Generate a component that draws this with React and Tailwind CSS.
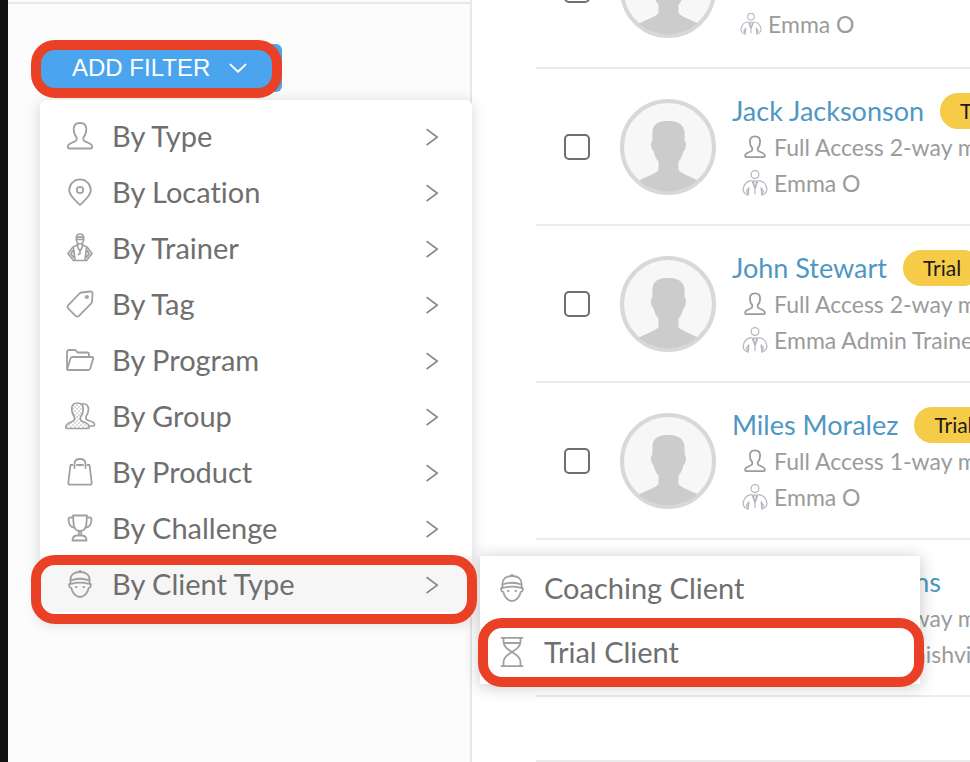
import { useState } from 'react';

const PERSON_PATH =
  'M16 3c-4.400 0-6.300 2.800-6.300 6.300 0 3.700.9 6 2.900 8.200v2.300c0 2.700-8.800 2.200-8.800 7.200 0 1 .5 1.500 1.500 1.500h21.400c1 0 1.500-.5 1.500-1.500 0-5-8.800-4.500-8.800-7.200v-2.300c2-2.200 2.900-4.500 2.900-8.200C22.300 5.800 20.400 3 16 3z';

function Icon({ className = 'size-8', strokeWidth = 1.8, children }) {
  return (
    <svg
      viewBox="0 0 32 32"
      fill="none"
      stroke="currentColor"
      strokeWidth={strokeWidth}
      strokeLinecap="round"
      strokeLinejoin="round"
      className={`shrink-0 ${className}`}
      aria-hidden="true"
    >
      {children}
    </svg>
  );
}

const PersonIcon = (props) => (
  <Icon {...props}>
    <path d={PERSON_PATH} />
  </Icon>
);

const PinIcon = () => (
  <Icon>
    <path d="M16 29C12 24.500 5.200 20 5.200 14.200a10.800 10.800 0 0 1 21.600 0C26.800 20 20 24.500 16 29z" />
    <circle cx="16" cy="14" r="3.200" />
  </Icon>
);

const TrainerIcon = () => (
  <Icon strokeWidth={1.7}>
    <path d="M12.500 5.500c0-2 1-3.500 3.500-3.500s3.500 1.500 3.500 3.500V8c0 2-1.500 4-3.500 4s-3.500-2-3.500-4z" />
    <path d="M12.500 5.500c2-.7 5-.7 7 0M12.500 7.500h7" />
    <path d="M13.500 11.500v1.500l-4.500 2L4 21.500l5.500 7h13l5.500-7-5-6.500-4.500-2v-1.500" />
    <path d="M13.500 13c.3 3 1 4.500 2.500 6 1.500-1.500 2.200-3 2.500-6M16 19v2.500l-1.500 1M9.500 16l1.500 12M22.500 16l-1.500 12M8.500 19l-1.500 3 2.500 3M23.500 19l1.500 3-2.500 3" />
  </Icon>
);

const TagIcon = () => (
  <Icon>
    <path d="M17.500 4.500 26.500 3.500c1.200-.1 2 .6 2 1.800l-.4 8c0 .8-.3 1.400-.8 2L15 27.800c-1.200 1.200-2.300 1.200-3.400.1l-7.300-7.300c-1.100-1.100-1.100-2.200 0-3.400L15.500 5.500c.6-.6 1.200-.9 2-1z" />
    <circle cx="22.800" cy="9" r="1.200" />
  </Icon>
);

const FolderIcon = () => (
  <Icon>
    <path d="M3 24.500V8c0-1.200.7-2 2-2h5.500c1 0 1.500.3 2 1.100l1 1.400H23c1.200 0 2 .7 2 2V13" />
    <path d="M3.200 25 6.500 14.500c.3-1 .9-1.500 2-1.500H28c1 0 1.500.7 1.200 1.700l-3 9.800c-.3 1-.9 1.500-2 1.500H4.200c-.8 0-1.200-.3-1-1z" />
  </Icon>
);

const GroupIcon = () => (
  <Icon strokeWidth={1.700}>
    <defs>
      <pattern id="dots" width="4" height="4" patternUnits="userSpaceOnUse">
        <circle cx="1" cy="1" r="0.700" fill="currentColor" stroke="none" />
        <circle cx="3" cy="3" r="0.700" fill="currentColor" stroke="none" />
      </pattern>
    </defs>
    <path
      fill="url(#dots)"
      d="M13.500 3C9.500 3 7.700 5.500 7.700 9c0 3.500.8 5.500 2.800 8v2.500c0 2.700-8.800 2.500-8.800 7.500 0 1 .5 1.500 1.500 1.500h20.600c1 0 1.500-.5 1.500-1.500 0-5-8.800-4.800-8.800-7.500V17c2-2.500 2.800-4.500 2.800-8 0-3.500-1.800-6-5.800-6z"
    />
    <path d="M18.500 3.800c4-.3 6 2 6 5.200 0 3.500-1 5.500-2.500 7.500v2c0 3 8.500 2 8.500 6 0 1-.4 1.500-1.300 1.500H25" />
  </Icon>
);

const BagIcon = () => (
  <Icon>
    <path d="M8.500 9H6.500l-2.200 17.500c-.2 1.400.5 2.200 1.800 2.200h19.800c1.300 0 2-.8 1.800-2.200L25.500 9h-2M13 9h6" />
    <path d="M10.500 12V8c0-3 2-5 5.500-5s5.500 2 5.500 5v4" />
  </Icon>
);

const TrophyIcon = () => (
  <Icon>
    <path d="M9 3.500h14l-.6 8.500c-.3 4-2.500 7-6.400 7s-6.100-3-6.400-7z" />
    <path d="M9 5.500H6.500C5 5.500 4.300 6.300 4.500 7.800c.4 4 2 7.700 6 7.700M23 5.500h2.500c1.500 0 2.200.8 2 2.300-.4 4-2 7.700-6 7.700" />
    <path d="M14.800 19v4.500h2.400V19M8.500 28.500c0-3 2-5 5-5h4c3 0 5 2 5 5z" />
  </Icon>
);

const ClientIcon = () => (
  <Icon>
    <path d="M6.500 12.500C6 7 10 4 16 4s10 3 9.500 8.500M14.800 4c0-1.600 2.400-1.600 2.400 0" />
    <path d="M6.500 12.500c6-2.200 13-2.200 19 0v3.500c-6-1.800-13-1.800-19 0z" />
    <path d="M6.500 15.500c-2 0-2 3.500.8 4.500 1 4.500 4.200 9 8.700 9s7.700-4.500 8.700-9c2.800-1 2.800-4.500.8-4.500" />
    <path d="M12 19h.5M19.500 19h.5" strokeWidth="2" />
  </Icon>
);

const HourglassIcon = () => (
  <Icon>
    <path d="M5.500 1.800h21M5.500 30.200h21M7.500 2v3.500c0 5 3.500 7.300 8.500 10.500 5 3.200 8.500 5.500 8.500 10.500V30M24.500 2v3.500c0 5-3.500 7.300-8.500 10.500-5 3.200-8.500 5.500-8.500 10.500V30M8 7h16" />
  </Icon>
);

const CoachIcon = ({ className }) => (
  <Icon className={`text-[#b4b6bf] ${className}`} strokeWidth={1.500}>
    <circle cx="16" cy="5.500" r="4.800" />
    <path d="M11.500 13C5.500 13.500 2.500 17.500 1.500 23c-.5 2.500 0 4 2 5.500l4 2.500 1-9-3 4 1.500 2.500M20.500 13c6 .5 9 4.500 10 10 .5 2.500 0 4-2 5.500l-4 2.500-1-9 3 4-1.500 2.500" />
    <path d="M12.500 13.500l3.500 10 3.500-10M14.500 13.500h3v4L16 20l-1.500-2.500zM16 24v5" />
  </Icon>
);

const ChevronRight = () => (
  <Icon className="size-6 text-[#858585]" strokeWidth={2.400}>
    <path d="M9.500 7.500l13.500 10-13.500 10" />
  </Icon>
);

const FILTERS = [
  { label: 'By Type', icon: PersonIcon },
  { label: 'By Location', icon: PinIcon },
  { label: 'By Trainer', icon: TrainerIcon },
  { label: 'By Tag', icon: TagIcon },
  { label: 'By Program', icon: FolderIcon },
  { label: 'By Group', icon: GroupIcon },
  { label: 'By Product', icon: BagIcon },
  { label: 'By Challenge', icon: TrophyIcon },
  {
    label: 'By Client Type',
    icon: ClientIcon,
    children: [
      { label: 'Coaching Client', icon: ClientIcon },
      { label: 'Trial Client', icon: HourglassIcon, highlight: true },
    ],
  },
];

const CLIENTS = [
  { name: 'Alex Morgan', access: 'Full Access', trainer: 'Emma O', compact: true },
  { name: 'Jack Jacksonson', access: 'Full Access 2-way messaging', trainer: 'Emma O', trial: true },
  { name: 'John Stewart', access: 'Full Access 2-way messaging', trainer: 'Emma Admin Trainer', trial: true },
  { name: 'Miles Moralez', access: 'Full Access 1-way messaging', trainer: 'Emma O', trial: true },
  { name: 'Petra Maximilians', access: 'Full Access 2-way messaging', trainer: 'Trainer Ali Manishvi' },
];

// Red outline drawn around the steps to follow
function Highlight({ className }) {
  return (
    <span
      className={`pointer-events-none absolute z-20 rounded-3xl border-10 border-[#ea4025] ${className}`}
    />
  );
}

function FilterMenu() {
  const [active, setActive] = useState('By Client Type');

  return (
    <ul className="absolute top-full left-0 z-10 mt-2 w-108 rounded-md bg-white py-2 shadow-[0_2px_16px_rgba(0,0,0,0.16)]">
      {FILTERS.map(({ label, icon: ItemIcon, children }) => (
        <li key={label} className="relative">
          <button
            type="button"
            onClick={() => setActive(label)}
            className={`flex h-14 w-full items-center gap-4 pr-7 pl-6 text-left ${active === label ? 'bg-[#f6f6f6]' : ''}`}
          >
            <ItemIcon />
            <span className="flex-1 text-[29px] leading-9 text-[#6f6f6f]">{label}</span>
            <ChevronRight />
          </button>
          {children && active === label && (
            <>
              <Highlight className="-top-px -right-[5px] -bottom-3 -left-[9px]" />
              <ul className="absolute top-0 left-full ml-2 w-110 bg-white shadow-[0_2px_16px_rgba(0,0,0,0.24)]">
                {children.map(({ label: name, icon: SubIcon, highlight }) => (
                  <li key={name} className="relative">
                    <button type="button" className="flex h-16 w-full items-center gap-4 px-4 text-left">
                      <SubIcon />
                      <span className="text-[29px] leading-9 text-[#6f6f6f]">{name}</span>
                    </button>
                    {highlight && <Highlight className="-top-0.5 -right-1 -bottom-[3px] -left-0.5" />}
                  </li>
                ))}
              </ul>
            </>
          )}
        </li>
      ))}
    </ul>
  );
}

function Avatar() {
  return (
    <svg viewBox="0 0 96 96" className="size-24 shrink-0" aria-hidden="true">
      <defs>
        <clipPath id="avatar">
          <circle cx="48" cy="48" r="44.500" />
        </clipPath>
      </defs>
      <circle cx="48" cy="48" r="46" fill="#f7f7f7" stroke="#d6d8da" strokeWidth="4" />
      <path
        clipPath="url(#avatar)"
        fill="#cccccc"
        d="M48 22c-9 0-15 2.500-15.500 10.500L32.300 42c-1.500.5-1.500 3-1 6 .5 2.500 1.200 3.500 2.200 4 1 4.500 2.500 8 5 10.500V71c-3 4-12 6-20 11v14h60V82c-8-5-17-7-20-11v-8.500c2.500-2.500 4-6 5-10.500 1-.5 1.700-1.500 2.200-4 .5-3 .5-5.500-1-6l-.2-9.500C63 24.500 57 22 48 22z"
      />
    </svg>
  );
}

function ClientRow({ client }) {
  return (
    <li className="flex min-h-[157px] items-center border-b-2 border-[#ebebeb] pl-7">
      <input
        type="checkbox"
        aria-label={`Select ${client.name}`}
        className="size-[26px] shrink-0 appearance-none rounded-[5px] border-2 border-[#6e6e6e] bg-white checked:bg-[#4ba5ee]"
      />
      <div className="ml-[30px]">
        <Avatar />
      </div>
      <div
        className={`ml-4 text-[23px] leading-9 whitespace-nowrap text-[#9b9b9b] ${client.compact ? 'pb-1' : ''}`}
      >
        <div className="flex items-center gap-4">
          <a href="#client" className="text-[27px] leading-9 text-[#4f97c3]">
            {client.name}
          </a>
          {client.trial && (
            <span className="rounded-full bg-[#f6cb47] px-5 text-[21px] leading-9 text-[#1c1c1c]">Trial</span>
          )}
        </div>
        <div className="flex items-center gap-1.5 pl-2.5">
          <PersonIcon className="size-[26px]" strokeWidth={2.200} />
          {client.access}
        </div>
        <div className={`flex items-center gap-1.5 ${client.compact ? 'pl-2 leading-10' : 'pl-2.5'}`}>
          <CoachIcon className={client.compact ? 'size-[22px]' : 'size-[26px]'} />
          {client.trainer}
        </div>
      </div>
    </li>
  );
}

export default function App() {
  const [open, setOpen] = useState(true);

  return (
    <div className="flex h-screen overflow-hidden border-l-8 border-[#131112] bg-white font-[Lato,sans-serif] text-[#a0a0a0] [font-variant-ligatures:none]">
      <aside className="relative z-10 w-116 shrink-0 border-r-2 border-[#e8e8e8] bg-[#fcfcfc]">
        <div className="h-1 border-b-2 border-[#e8e8e8]" />
        <div className="px-8 pt-10">
          <div className="relative inline-block">
            <button
              type="button"
              onClick={() => setOpen(!open)}
              className="flex h-12 items-center gap-4 rounded-md bg-[#4ba5ee] px-8 font-['Liberation_Sans',sans-serif] text-2xl text-white"
            >
              ADD FILTER
              <Icon className="size-6" strokeWidth={2.600}>
                <path d="M6 11.500l10 9.500 10-9.500" />
              </Icon>
            </button>
            <Highlight className="-top-1 right-0 -bottom-1.5 -left-[9px]" />
            {open && <FilterMenu />}
          </div>
        </div>
      </aside>

      <main className="min-w-0 flex-1 overflow-hidden pl-16">
        <ul className="-mt-22">
          {CLIENTS.map((client) => (
            <ClientRow key={client.name} client={client} />
          ))}
        </ul>
        <div className="h-[65px] border-b-2 border-[#ebebeb]" />
      </main>
    </div>
  );
}
